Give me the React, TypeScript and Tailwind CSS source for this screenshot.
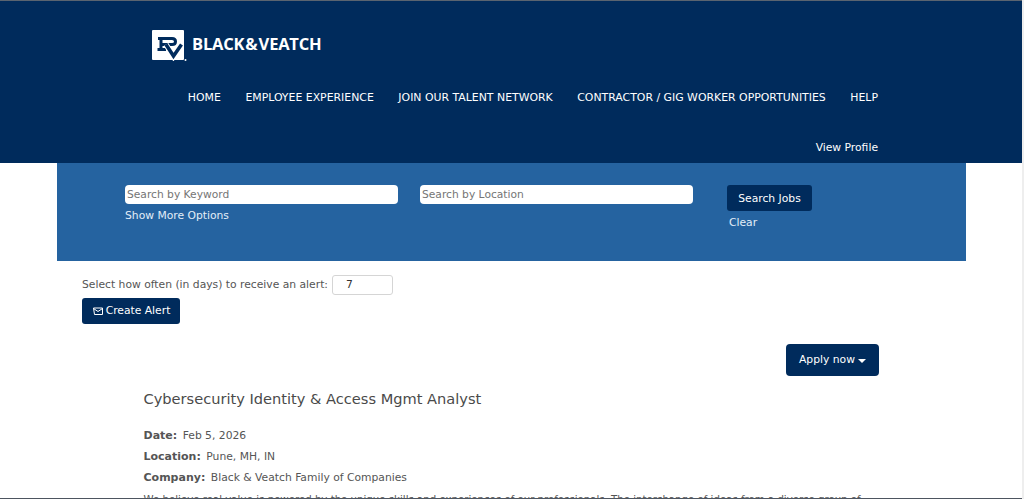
import React from "react";

const navItems = [
  "HOME",
  "EMPLOYEE EXPERIENCE",
  "JOIN OUR TALENT NETWORK",
  "CONTRACTOR / GIG WORKER OPPORTUNITIES",
  "HELP",
];

const Logo = () => (
  <div className="flex items-center gap-[5px]">
    <svg width="35" height="31" viewBox="0 0 35 31" className="block">
      <rect x="0" y="0" width="32" height="30" rx="1" fill="#ffffff" />
      <path d="M6 8.5H20q3.5 0 3.5 3t-3.500 3H9" fill="none" stroke="#002b5c" strokeWidth="3" />
      <path d="M9 8.500V20M5.500 19.500H14" fill="none" stroke="#002b5c" strokeWidth="3" />
      <path d="M14 14.500L21.500 26.500L29.500 14.500" fill="none" stroke="#ffffff" strokeWidth="5.500" />
      <path d="M14 14.500L21.500 26L29.500 14.500" fill="none" stroke="#002b5c" strokeWidth="3.500" />
      <circle cx="33.500" cy="30" r="1" fill="#ffffff" />
    </svg>
    <span className="-mt-[2px] font-['Open_Sans',sans-serif] text-[16.5px] font-bold tracking-[-0.2px] text-white [word-spacing:-3px]">
      BLACK &amp; VEATCH
    </span>
  </div>
);

const Field = ({ placeholder }: { placeholder: string }) => (
  <div className="flex h-[19px] w-[273px] items-center rounded-[4px] bg-white pl-[2px] pt-[2px] text-[10.7px] text-[#757575]">
    {placeholder}
  </div>
);

const Meta = ({ label, value }: { label: string; value: string }) => (
  <p className="h-[21px] leading-[21px]">
    <span className="mr-[5.500px] text-[11px] font-bold">{label}</span>
    {value}
  </p>
);

export default function App() {
  return (
    <div className="relative h-[499px] w-[1024px] overflow-hidden bg-white font-['DejaVu_Sans','Liberation_Sans',sans-serif] text-[10.75px] text-[#555555]">
      {/* Window edges */}
      <div className="absolute inset-x-0 top-0 h-px bg-[#5a6470]" />
      <div className="absolute inset-x-0 bottom-0 h-px bg-[#4d5560]" />
      <div className="absolute inset-y-0 right-0 w-[2px] bg-[#eeeeee]" />

      <header className="h-[163px] w-[1022px] bg-[#002b5c] pt-[30px]">
        <div className="pl-[152px]">
          <Logo />
        </div>
        <nav className="mt-[29px] flex justify-end gap-[24.500px] pr-[144px] text-[10.9px] text-white">
          {navItems.map((item) => (
            <a key={item} className="leading-[16px]">
              {item}
            </a>
          ))}
        </nav>
        <div className="mt-[34px] pr-[144px] text-right leading-[16px] text-white">View Profile</div>
      </header>

      <section className="ml-[57px] flex h-[98px] w-[909px] gap-[22px] bg-[#2563a0] pl-[68px] pt-[22px]">
        <div>
          <Field placeholder="Search by Keyword" />
          <a className="mt-[4px] block leading-[16px] text-[#e3eef8]">Show More Options</a>
        </div>
        <Field placeholder="Search by Location" />
        <div className="ml-[12px]">
          <button className="h-[26px] w-[85px] rounded-[3px] bg-[#002b5c] pt-[2px] text-[10.75px] text-white">Search Jobs</button>
          <a className="ml-[2px] mt-[4px] block leading-[16px] text-[#e3eef8]">Clear</a>
        </div>
      </section>

      <section className="pl-[82px] pt-[14px]">
        <div className="flex items-center gap-[4px]">
          <span>Select how often (in days) to receive an alert:</span>
          <div className="flex h-[20px] w-[61px] items-center rounded-[3px] border border-[#d5d5d5] pl-[13px] text-[#333333]">7</div>
        </div>
        <button className="mt-[3px] flex h-[26px] w-[98px] items-center justify-center gap-[3px] rounded-[3px] bg-[#002b5c] pt-[1px] text-white">
          <svg width="11" height="9" viewBox="0 0 11 9" fill="none" stroke="#ffffff" strokeWidth="1">
            <path d="M1.500 1h9v6.500h-8zM1.500 1.500l4.500 3 4.500-3" />
          </svg>
          Create Alert
        </button>
      </section>

      <div className="flex justify-end pr-[145px] pt-[20px]">
        <button className="flex h-[32px] w-[93px] items-center justify-center gap-[3px] rounded-[4px] bg-[#002b5c] text-white">
          Apply now
          <span className="mt-[2px] h-0 w-0 border-x-[4px] border-t-[4px] border-x-transparent border-t-white" />
        </button>
      </div>

      <article className="pl-[143.500px] pt-[13px]">
        <h1 className="text-[14.6px] font-normal leading-[20px] text-[#4a4a4a]">Cybersecurity Identity &amp; Access Mgmt Analyst</h1>
        <div className="mt-[16px]">
          <Meta label="Date:" value="Feb 5, 2026" />
          <Meta label="Location:" value="Pune, MH, IN" />
          <Meta label="Company:" value="Black & Veatch Family of Companies" />
        </div>
        <p className="mt-[2px] whitespace-nowrap text-[10.2px] leading-[20px]">
          We believe real value is powered by the unique skills and experiences of our professionals. The interchange of ideas from a diverse group of
        </p>
      </article>
    </div>
  );
}
